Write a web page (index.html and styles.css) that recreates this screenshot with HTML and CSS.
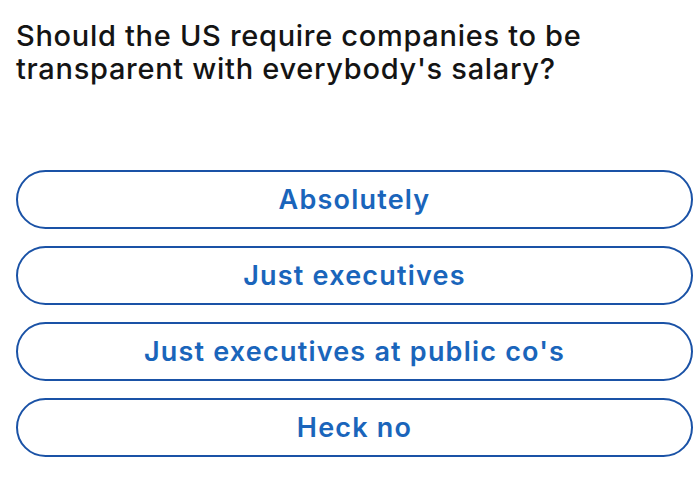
FILE: index.html
```html
<!DOCTYPE html>
<html lang="en">
<head>
  <meta charset="UTF-8" />
  <meta name="viewport" content="width=device-width, initial-scale=1.0"/>
  <title>Poll</title>
  <link rel="stylesheet" href="styles.css">
</head>
<body>
  <div class="poll">
    <h2 class="question">Should the US require companies to be transparent with everybody's salary?</h2>

    <div class="options">
      <button class="option">Absolutely</button>
      <button class="option">Just executives</button>
      <button class="option">Just executives at public co's</button>
      <button class="option">Heck no</button>
    </div>
  </div>
</body>
</html>
```

FILE: styles.css
```css
* { box-sizing: border-box; }

body {
  margin: 0;
  background: #fff;
  font-family: Inter, 'Liberation Sans', sans-serif;
  color: #111;
}

.poll {
  padding: 19px 7px 0 16px;
}

.question {
  margin: 0;
  max-width: 620px;
  font-size: 29px;
  font-weight: 500;
  line-height: 33px;
  letter-spacing: 0.7px;
  color: #141414;
}

.options {
  display: flex;
  flex-direction: column;
  gap: 17px;
  margin-top: 85px;
}

.option {
  height: 59px;
  width: 100%;
  background: #fff;
  border: 2px solid #1a52a6;
  border-radius: 30px;
  font-family: inherit;
  font-size: 27px;
  font-weight: 600;
  letter-spacing: 1.2px;
  color: #1a65bb;
  cursor: pointer;
}
```
